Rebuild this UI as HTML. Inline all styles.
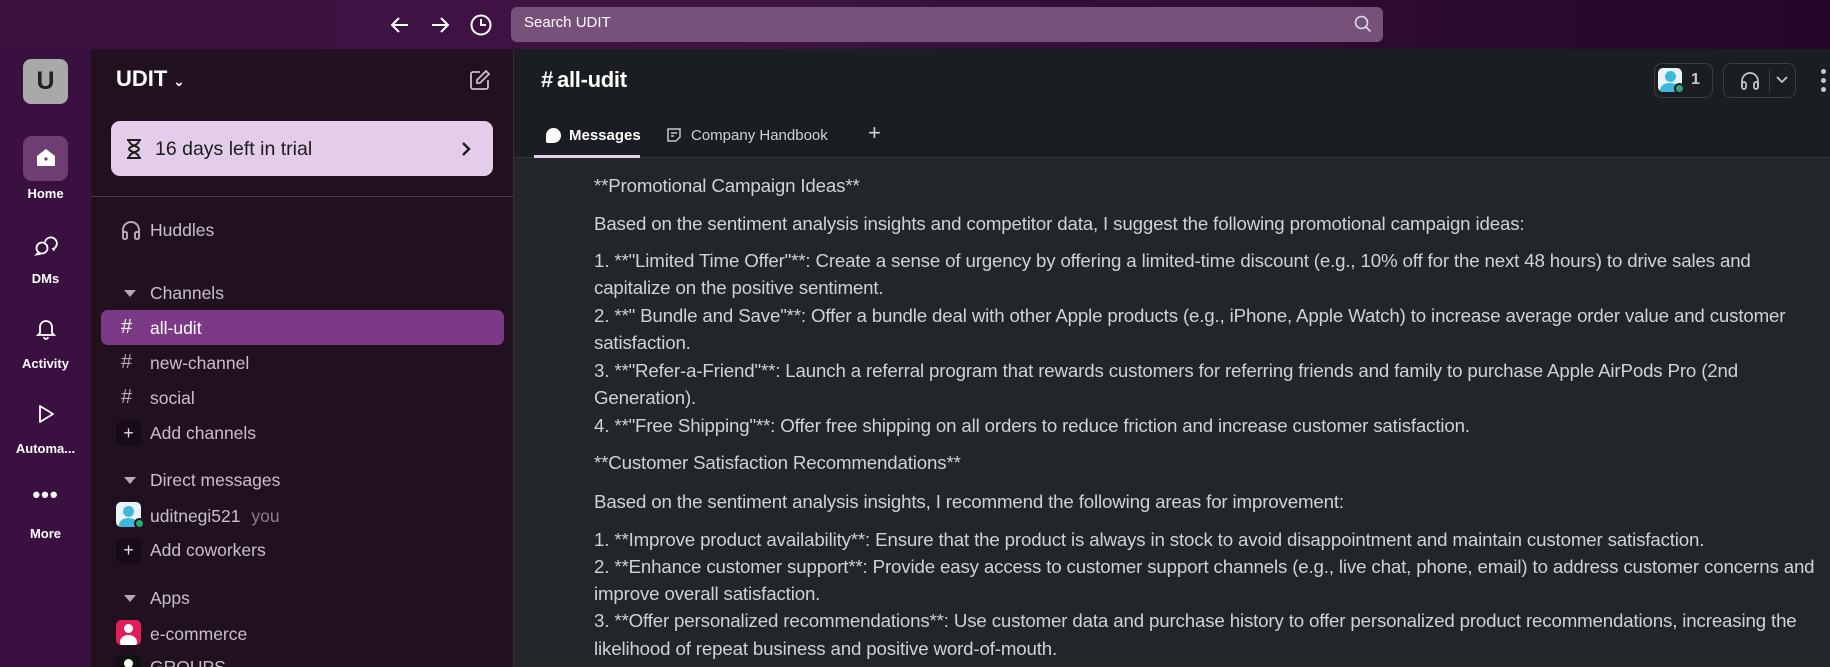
<!DOCTYPE html>
<html><head><meta charset="utf-8"><style>
*{margin:0;padding:0;box-sizing:border-box}
html,body{width:1830px;height:667px;overflow:hidden}
body{background:#2a0a2b;font-family:"Liberation Sans",sans-serif;position:relative}
.abs{position:absolute}
.top{left:0;top:0;width:1830px;height:49px;background:linear-gradient(90deg,#3c1140,#3f1343 40%,#2a0a2c 80%,#26072a)}
.rail{left:0;top:49px;width:91px;height:618px;background:#3a1040}
.side{left:91px;top:49px;width:423px;height:618px;background:#21111f;border-top-left-radius:8px;border-right:1px solid #3a2a3a}
.main{left:514px;top:49px;width:1316px;height:618px;background:#222529}
.hdr{left:514px;top:49px;width:1316px;height:109px;background:#1a1d21;border-bottom:1px solid #33363a}
.rl{color:#fff;font-size:13px;font-weight:bold;text-align:center;width:91px;left:0}
.si{color:#c9bec9;font-size:17.5px;left:150px}
.hash{color:#b7a8b7;font-size:20px;left:121px}
.msg{left:594px;color:#d1d2d3;font-size:18.7px;white-space:nowrap;letter-spacing:-0.15px}
</style></head><body>
<div class="abs top"></div>
<svg class="abs" style="left:388px;top:12px" width="110" height="26" viewBox="0 0 110 26" fill="none" stroke="#fff" stroke-width="2">
<path d="M20 13H4M11 6l-7 7 7 7"/><path d="M44 13h16M53 6l7 7-7 7"/><circle cx="93" cy="13" r="9.5"/><path d="M93 7v6h5"/></svg>
<div class="abs" style="left:511px;top:7px;width:872px;height:35px;background:#77517a;border-radius:6px"></div>
<div class="abs" style="left:524px;top:14px;color:#fff;font-size:15px">Search UDIT</div>
<svg class="abs" style="left:1353px;top:14px" width="20" height="20" fill="none" stroke="#ddd" stroke-width="1.6"><circle cx="8.5" cy="8.5" r="6"/><path d="M13 13l4.5 4.5"/></svg>
<div class="abs rail"></div>
<div class="abs" style="left:23px;top:59px;width:45px;height:45px;background:#a9a9a9;border-radius:8px;color:#222;font-size:25px;font-weight:bold;text-align:center;line-height:45px">U</div>
<div class="abs" style="left:23px;top:136px;width:45px;height:45px;background:#6e3d72;border-radius:9px"></div>
<svg class="abs" style="left:34px;top:146px" width="24" height="24" viewBox="0 0 24 24"><path d="M3 10L12 3l9 7v10H3z" fill="#fff"/><circle cx="12" cy="13" r="1.6" fill="#6e3d72"/></svg>
<div class="abs rl" style="top:186px">Home</div>
<svg class="abs" style="left:33px;top:233px" width="26" height="24" fill="none" stroke="#fff" stroke-width="1.8"><circle cx="9" cy="15" r="5.5"/><path d="M5 20l-1.5 1.5 4-.5"/><path d="M12 9a6 6 0 1 1 8 7l1.5 1.5"/></svg>
<div class="abs rl" style="top:271px">DMs</div>
<svg class="abs" style="left:34px;top:317px" width="24" height="24" fill="none" stroke="#fff" stroke-width="1.8"><path d="M6 16V10a6 6 0 0 1 12 0v6l2 2H4z"/><path d="M10 20a2 2 0 0 0 4 0"/></svg>
<div class="abs rl" style="top:356px">Activity</div>
<svg class="abs" style="left:34px;top:402px" width="24" height="24" fill="none" stroke="#fff" stroke-width="1.8"><path d="M6 4v16l13-8z" stroke-linejoin="round"/></svg>
<div class="abs rl" style="top:441px">Automa...</div>
<div class="abs rl" style="top:482px;font-size:22px;letter-spacing:1px">•••</div>
<div class="abs rl" style="top:526px">More</div>
<div class="abs side"></div>
<div class="abs" style="left:116px;top:66px;color:#fff;font-size:22px;font-weight:bold">UDIT <span style="font-size:13px">&#8964;</span></div>
<svg class="abs" style="left:468px;top:68px" width="24" height="24" fill="none" stroke="#c9bec9" stroke-width="1.8"><path d="M12 4H5a2 2 0 0 0-2 2v13a2 2 0 0 0 2 2h13a2 2 0 0 0 2-2v-7"/><path d="M18 3l3 3-9 9H9v-3z"/></svg>
<div class="abs" style="left:111px;top:121px;width:382px;height:55px;background:#e3cdea;border-radius:9px"></div>
<svg class="abs" style="left:124px;top:138px" width="20" height="22" fill="none" stroke="#1d1c1d" stroke-width="2"><path d="M3 2h14M3 20h14M5 2c0 6 10 6 10 9s-10 3-10 9M15 2c0 6-10 6-10 9s10 3 10 9"/></svg>
<div class="abs" style="left:155px;top:138px;color:#1d1c1d;font-size:19.5px">16 days left in trial</div>
<svg class="abs" style="left:460px;top:140px" width="12" height="18" fill="none" stroke="#1d1c1d" stroke-width="2.4"><path d="M3 3l6 6-6 6"/></svg>
<div class="abs" style="left:91px;top:196px;width:422px;height:1px;background:#4a3a4a"></div>
<svg class="abs" style="left:120px;top:219px" width="22" height="22" fill="none" stroke="#b7a8b7" stroke-width="2"><path d="M3 17v-6a8 8 0 0 1 16 0v6"/><rect x="3" y="13" width="4" height="7" rx="1.5"/><rect x="15" y="13" width="4" height="7" rx="1.5"/></svg>
<div class="abs si" style="top:220px">Huddles</div>
<div class="abs" style="left:124px;top:290px;width:0;height:0;border-left:6px solid transparent;border-right:6px solid transparent;border-top:7px solid #b7a8b7"></div>
<div class="abs si" style="top:283px">Channels</div>
<div class="abs" style="left:101px;top:310px;width:403px;height:35px;background:#7c3a86;border-radius:7px"></div>
<div class="abs hash" style="top:316px;color:#fff">#</div><div class="abs si" style="top:318px;color:#fff">all-udit</div>
<div class="abs hash" style="top:351px">#</div><div class="abs si" style="top:353px">new-channel</div>
<div class="abs hash" style="top:386px">#</div><div class="abs si" style="top:388px">social</div>
<div class="abs" style="left:116px;top:421px;width:25px;height:25px;background:#180a17;border-radius:5px;color:#ddd;text-align:center;font-size:18px;line-height:24px">+</div>
<div class="abs si" style="top:423px">Add channels</div>
<div class="abs" style="left:124px;top:477px;width:0;height:0;border-left:6px solid transparent;border-right:6px solid transparent;border-top:7px solid #b7a8b7"></div>
<div class="abs si" style="top:470px">Direct messages</div>
<div class="abs" style="left:116px;top:502px;width:25px;height:25px;background:#e8f4f8;border-radius:5px;overflow:hidden"><div class="abs" style="left:7px;top:4px;width:11px;height:11px;border-radius:50%;background:#3fb7dc"></div><div class="abs" style="left:3px;top:16px;width:19px;height:14px;border-radius:50%;background:#3fb7dc"></div></div>
<div class="abs" style="left:134px;top:518px;width:11px;height:11px;border-radius:50%;background:#2bac76;border:2px solid #21111f"></div>
<div class="abs si" style="top:506px">uditnegi521 <span style="color:#8d7f8d;margin-left:6px">you</span></div>
<div class="abs" style="left:116px;top:538px;width:25px;height:25px;background:#180a17;border-radius:5px;color:#ddd;text-align:center;font-size:18px;line-height:24px">+</div>
<div class="abs si" style="top:540px">Add coworkers</div>
<div class="abs" style="left:124px;top:595px;width:0;height:0;border-left:6px solid transparent;border-right:6px solid transparent;border-top:7px solid #b7a8b7"></div>
<div class="abs si" style="top:588px">Apps</div>
<div class="abs" style="left:116px;top:620px;width:25px;height:25px;background:#e01e5a;border-radius:5px;overflow:hidden"><div class="abs" style="left:8px;top:4px;width:9px;height:9px;border-radius:50%;background:#fff"></div><div class="abs" style="left:4px;top:15px;width:17px;height:14px;border-radius:50%;background:#fff"></div></div>
<div class="abs si" style="top:624px">e-commerce</div>
<div class="abs" style="left:116px;top:655px;width:25px;height:25px;background:#111;border-radius:5px"><div class="abs" style="left:8px;top:4px;width:9px;height:9px;border-radius:50%;background:#fff"></div></div>
<div class="abs si" style="top:657px">GROUPS</div>
<div class="abs main"></div>
<div class="abs hdr"></div>
<div class="abs" style="left:541px;top:67px;color:#fff;font-size:22px;font-weight:bold;letter-spacing:-0.3px">#&thinsp;all-udit</div>
<div class="abs" style="left:546px;top:128px;width:15px;height:15px;border-radius:50% 50% 50% 2px;background:#fff"></div>
<div class="abs" style="left:569px;top:127px;color:#fff;font-size:15px;font-weight:bold">Messages</div>
<div class="abs" style="left:534px;top:155px;width:106px;height:3px;background:#e3cdea"></div>
<svg class="abs" style="left:665px;top:126px" width="18" height="18" fill="none" stroke="#c8c8c8" stroke-width="1.5"><path d="M3 3h12v8l-4 4H3z"/><path d="M6 7h6M6 10h3"/></svg>
<div class="abs" style="left:691px;top:127px;color:#d1d2d3;font-size:15px">Company Handbook</div>
<div class="abs" style="left:868px;top:120px;color:#d1d2d3;font-size:22px">+</div>
<div class="abs" style="left:1654px;top:63px;width:59px;height:35px;border:1px solid #3a3d42;border-radius:8px"></div>
<div class="abs" style="left:1658px;top:68px;width:24px;height:24px;background:#e8f4f8;border-radius:5px;overflow:hidden"><div class="abs" style="left:7px;top:3px;width:11px;height:11px;border-radius:50%;background:#3fb7dc"></div><div class="abs" style="left:2px;top:15px;width:20px;height:14px;border-radius:50%;background:#3fb7dc"></div></div>
<div class="abs" style="left:1674px;top:83px;width:11px;height:11px;border-radius:50%;background:#2bac76;border:2px solid #1a1d21"></div>
<div class="abs" style="left:1691px;top:71px;color:#c8c8c8;font-size:16px;font-weight:bold">1</div>
<div class="abs" style="left:1723px;top:63px;width:73px;height:35px;border:1px solid #3a3d42;border-radius:8px"></div>
<svg class="abs" style="left:1738px;top:69px" width="24" height="24" fill="none" stroke="#c8c8c8" stroke-width="1.7"><path d="M4 18v-6a8 8 0 0 1 16 0v6"/><rect x="4" y="13" width="4" height="7" rx="2"/><rect x="16" y="13" width="4" height="7" rx="2"/></svg>
<div class="abs" style="left:1769px;top:69px;width:1px;height:24px;background:#3a3d42"></div>
<svg class="abs" style="left:1775px;top:75px" width="14" height="10" fill="none" stroke="#c8c8c8" stroke-width="1.7"><path d="M2 2l5 5 5-5"/></svg>
<div class="abs" style="left:1821px;top:69px;width:5px;height:5px;border-radius:50%;background:#c8c8c8;box-shadow:0 9px 0 #c8c8c8,0 18px 0 #c8c8c8"></div>
<div class="abs msg" style="top:175px">**Promotional Campaign Ideas**</div>
<div class="abs msg" style="top:213px">Based on the sentiment analysis insights and competitor data, I suggest the following promotional campaign ideas:</div>
<div class="abs msg" style="top:250px">1. **"Limited Time Offer"**: Create a sense of urgency by offering a limited-time discount (e.g., 10% off for the next 48 hours) to drive sales and</div>
<div class="abs msg" style="top:277px">capitalize on the positive sentiment.</div>
<div class="abs msg" style="top:305px">2. **" Bundle and Save"**: Offer a bundle deal with other Apple products (e.g., iPhone, Apple Watch) to increase average order value and customer</div>
<div class="abs msg" style="top:332px">satisfaction.</div>
<div class="abs msg" style="top:360px">3. **"Refer-a-Friend"**: Launch a referral program that rewards customers for referring friends and family to purchase Apple AirPods Pro (2nd</div>
<div class="abs msg" style="top:387px">Generation).</div>
<div class="abs msg" style="top:415px">4. **"Free Shipping"**: Offer free shipping on all orders to reduce friction and increase customer satisfaction.</div>
<div class="abs msg" style="top:452px">**Customer Satisfaction Recommendations**</div>
<div class="abs msg" style="top:491px">Based on the sentiment analysis insights, I recommend the following areas for improvement:</div>
<div class="abs msg" style="top:529px">1. **Improve product availability**: Ensure that the product is always in stock to avoid disappointment and maintain customer satisfaction.</div>
<div class="abs msg" style="top:556px">2. **Enhance customer support**: Provide easy access to customer support channels (e.g., live chat, phone, email) to address customer concerns and</div>
<div class="abs msg" style="top:583px">improve overall satisfaction.</div>
<div class="abs msg" style="top:610px">3. **Offer personalized recommendations**: Use customer data and purchase history to offer personalized product recommendations, increasing the</div>
<div class="abs msg" style="top:638px">likelihood of repeat business and positive word-of-mouth.</div>
</body></html>
